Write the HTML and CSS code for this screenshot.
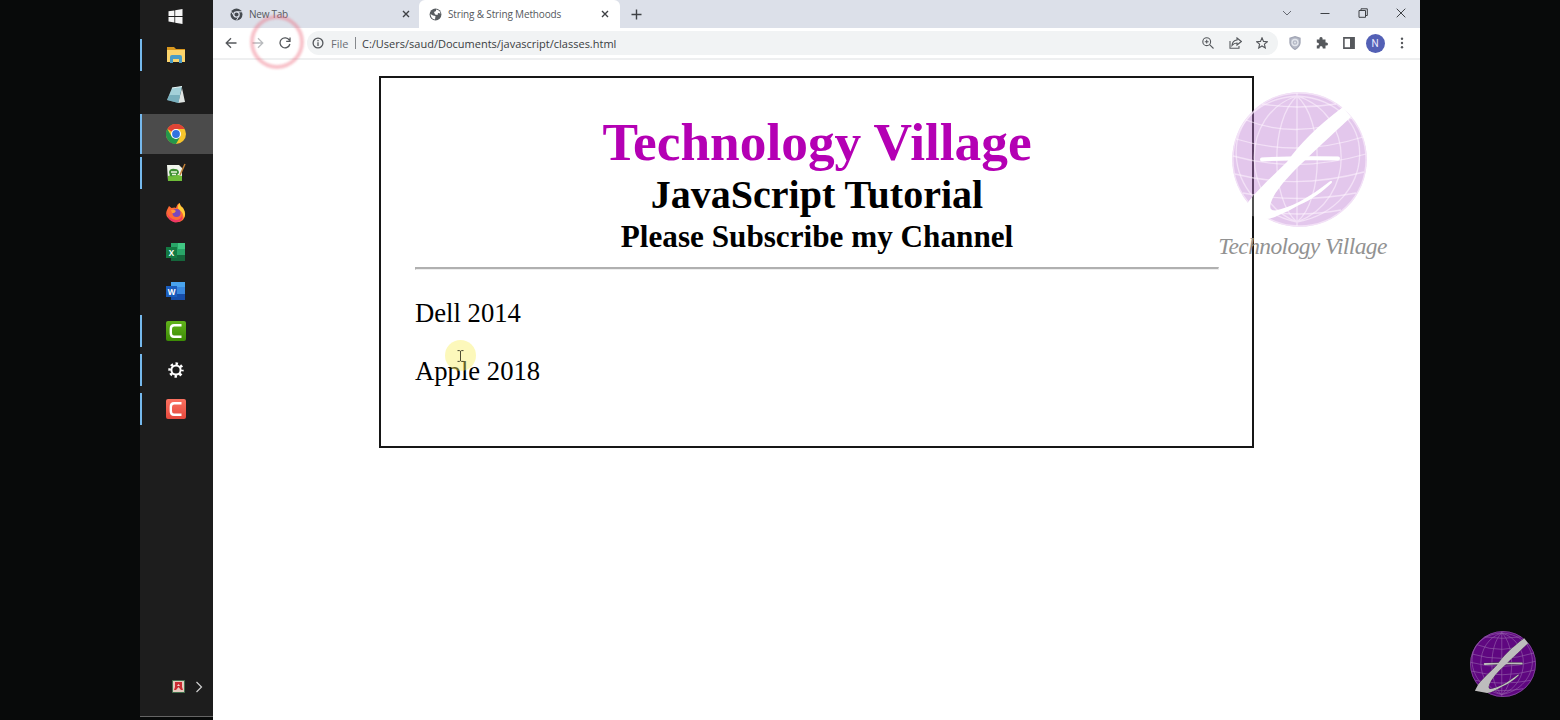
FILE: index.html
```
<!DOCTYPE html>
<html lang="en">
<head>
<meta charset="utf-8">
<title>String &amp; String Methoods</title>
<link rel="stylesheet" href="styles.css">
</head>
<body>
<svg class="defs" width="0" height="0" aria-hidden="true">
  <path id="mark" d="M111 15C84 35 67 53 55 70C42 83 29 94 17 109L10 122L35 127Q42 126 47 123Q57 119 67 113C81 107 91 99 99.500 91C101 89 99 88 97 90C88 97 78 104 67 110Q55 116 43.500 118.500C37 119 36 114 43.500 101Q51 90 60 81C81 60 105 38 119 25Z"/>
  <mask id="cut" maskUnits="userSpaceOnUse" x="-1" y="-1" width="137" height="137">
    <path fill="#fff" d="M-1-1H136V136H-1Z"/>
    <use href="#mark" fill="#000"/>
    <path d="M30 67.500Q67 65.500 106 66.500" fill="none" stroke="#000" stroke-width="4" stroke-linecap="round"/>
  </mask>
  <symbol id="globe" viewBox="0 0 135 135">
    <g mask="url(#cut)">
      <circle class="globe-ball" cx="67.5" cy="67.5" r="67.3"/>
      <g class="globe-grid">
        <circle cx="67.5" cy="67.5" r="66.5"/>
        <path d="M65 1V134M65 4C38 28 38 108 65 130M65 4C92 28 92 108 65 130M65 4C8 22 8 108 65 130M65 4C124 22 124 108 65 130M65 4C-22 10 -10 115 65 130M65 4C152 10 145 115 65 130"/>
        <path d="M30 12Q65 18 104 12M14 28Q65 48 120 26M4 47Q65 66 131 45M1 64Q65 82 134 62M3 82Q65 98 132 80M11 101Q65 112 124 101M26 118Q65 126 109 118"/>
      </g>
    </g>
    <use class="globe-mark" href="#mark"/>
    <path class="globe-bar" d="M30 67.500Q67 65.500 106 66.500"/>
  </symbol>
  <symbol id="camtasia" viewBox="0 0 20 20">
    <path d="M15.500 4.200H8Q4.800 4.200 4.800 8V12Q4.800 15.800 8 15.800H15.500" fill="none" stroke="#fff" stroke-width="2.400"/>
  </symbol>
</svg>

<div class="screen">
  <nav class="taskbar">
    <div class="task"><svg width="15" height="15" viewBox="0 0 15 15"><path fill="#f5f5f5" d="M.5 2.300L6.400 1.400V7H.5ZM7.200 1.200L14.500 0V7H7.200ZM.5 7.900H6.400V13.500L.5 12.600ZM7.200 7.900H14.500V15L7.200 13.700Z"/></svg></div>
    <div class="task open"><svg width="20" height="18" viewBox="0 0 20 18"><path fill="#d9981f" d="M1 1H8L10 3H19V8H1Z"/><path fill="#fbd46c" d="M1 4H19V16H1Z"/><path fill="#4a9cc6" d="M4 17V11Q4 9 6 9H14Q16 9 16 11V17H13V13H7V17Z"/></svg></div>
    <div class="task"><svg width="20" height="20" viewBox="0 0 20 20"><path fill="#dfe4e2" d="M16 3L19 17L12 18Z"/><path fill="#a3d0d9" d="M6 3L16 1.500L12.500 18L1 15Z"/><path fill="#5b9aaa" d="M3.500 10L14 10L12.500 18L1 15Z" opacity=".6"/><path stroke="#e9f7f8" stroke-width="1" d="M6 3L16 1.500"/></svg></div>
    <div class="task open active"><svg width="20" height="20" viewBox="0 0 20 20"><circle cx="10" cy="10" r="10" fill="#f7c52c"/><path fill="#df4436" d="M10 10L1.300 5A10 10 0 0 1 18.700 5H10Z"/><path fill="#24974b" d="M1.300 5A10 10 0 0 0 10 20L14.300 12.500L5.700 12.500Z"/><circle cx="10" cy="10" r="5" fill="#fff"/><circle cx="10" cy="10" r="3.900" fill="#3273df"/></svg></div>
    <div class="task open"><svg width="20" height="20" viewBox="0 0 20 20"><path fill="#f0f5ec" d="M1 2H13L16 5V18H2Z"/><path fill="#6ebc38" d="M2 13Q9 10 16 13V18H2Z"/><path fill="#3d8f32" d="M3 9Q4 5 9 6Q13 6 13 10Q10 14 4 13Z"/><path d="M5 9H11M6 11.500H10" stroke="#e9f5dc" stroke-width="1.300"/><path d="M19 1L14 12" stroke="#c48238" stroke-width="1.500"/></svg></div>
    <div class="task"><svg width="20" height="20" viewBox="0 0 20 20"><path fill="#ff6b35" d="M3 3L5.500 5Q9 4 10 5Q11 1 13.500 0Q14 3 17 5Q21 12 17 17Q12 21 6 18Q-2 14 1 7Q2 5 3 3Z"/><path fill="#ffcd38" d="M13.500 0Q14 3 17 5Q21 11 17.500 16Q18 10 13.500 7Q10 5 13.500 0Z"/><path fill="#ef3764" d="M1 8Q2 16 10 17Q15 17 16 12Q18 19 9 19.500Q1 18 1 8Z"/><circle cx="10.500" cy="10" r="4" fill="#7949bd"/><path fill="#ff9c32" d="M5 7Q8 6 10 8Q8 11 6 10Z"/></svg></div>
    <div class="task"><svg width="20" height="20" viewBox="0 0 20 20"><path fill="#29a568" d="M5 1H19V19H5Z"/><path fill="#40c783" d="M12 1H19V7H12Z"/><path fill="#15663b" d="M5 13H19V19H5Z"/><path fill="#147a43" d="M0 5H11V16H0Z"/><text x="5.500" y="13.500" class="app-letter">X</text></svg></div>
    <div class="task"><svg width="20" height="20" viewBox="0 0 20 20"><path fill="#3988df" d="M5 1H19V19H5Z"/><path fill="#49a3ed" d="M5 1H19V6H5Z"/><path fill="#174da9" d="M5 13H19V19H5Z"/><path fill="#1b5dbd" d="M0 5H11V16H0Z"/><text x="5.500" y="13.500" class="app-letter">W</text></svg></div>
    <div class="task open"><svg class="cam green" width="20" height="20"><use href="#camtasia"/></svg></div>
    <div class="task open"><svg width="16" height="16" viewBox="0 0 16 16" fill="none" stroke="#fff"><circle cx="8" cy="8" r="4.600" stroke-width="2"/><circle cx="8" cy="8" r="6.400" stroke-width="2.600" stroke-dasharray="2.500 2.527" stroke-dashoffset="1.250"/></svg></div>
    <div class="task open"><svg class="cam red" width="20" height="20"><use href="#camtasia"/></svg></div>
    <div class="tray">
      <svg width="13" height="13" viewBox="0 0 13 13"><path fill="#e5cbbf" stroke="#40714d" d="M.5.5H12.500V12.500H.5Z"/><path fill="#c82c31" d="M3 2H10V7L11 10H9L6.500 7L4 10H2L3 7Z"/><path fill="#f5d6d0" d="M6.500 4L8 6H5Z"/></svg>
      <svg width="8" height="12" viewBox="0 0 8 12"><path d="M1.500 1L6.500 6L1.500 11" fill="none" stroke="#d0d0d0" stroke-width="1.200"/></svg>
    </div>
  </nav>

  <main class="window">
    <header class="tabs">
      <div class="tab first">
        <svg width="13" height="13" viewBox="0 0 13 13"><circle cx="6.500" cy="6.500" r="6" fill="#454a50"/><circle cx="6.500" cy="6.500" r="2.700" fill="#454a50" stroke="#dde1ea" stroke-width="1.200"/><path d="M6.500 3.800H12M4 8L1.300 3.500M9 8L6.300 12.500" stroke="#dde1ea"/></svg>
        <span>New Tab</span>
        <svg class="close" width="8" height="8" viewBox="0 0 8 8"><path d="M1 1L7 7M7 1L1 7"/></svg>
      </div>
      <div class="tab current">
        <svg width="13" height="13" viewBox="0 0 13 13"><circle cx="6.500" cy="6.500" r="5.900" fill="#595d61"/><path fill="#fff" d="M7 1.500Q11 2 11.500 5.500L9 5L8.500 7L6 6.500L5 4L7 3ZM1.500 6L4 7.500L6.500 8L6 11.500Q2 11 1.500 6Z"/></svg>
        <span>String &amp; String Methoods</span>
        <svg class="close" width="8" height="8" viewBox="0 0 8 8"><path d="M1 1L7 7M7 1L1 7"/></svg>
      </div>
      <svg class="plus" width="11" height="11" viewBox="0 0 11 11"><path d="M5.500.5V10.500M.5 5.500H10.500"/></svg>
      <div class="controls">
        <svg width="10" height="10" viewBox="0 0 10 10"><path d="M1 3L5 7L9 3"/></svg>
        <svg width="10" height="10" viewBox="0 0 10 10"><path d="M.5 5.500H9.500"/></svg>
        <svg width="10" height="10" viewBox="0 0 10 10"><path d="M1 2.500H7.500V9.300H1ZM3 2.500V.8H9.300V7.500H7.500"/></svg>
        <svg width="10" height="10" viewBox="0 0 10 10"><path d="M.7.7L9.300 9.300M9.300.7L.7 9.300"/></svg>
      </div>
    </header>
    <div class="toolbar">
      <div class="nav">
        <svg width="12" height="12" viewBox="0 0 12 12"><path d="M11.500 6H1.500M6 1.200L1.200 6L6 10.800"/></svg>
        <svg class="muted" width="12" height="12" viewBox="0 0 12 12"><path d="M.5 6H10.500M6 1.200L10.800 6L6 10.800"/></svg>
        <svg width="12" height="12" viewBox="0 0 12 12"><path d="M10.300 3.200A5 5 0 1 0 10.900 7M11 .5V4.300H7.200"/></svg>
      </div>
      <div class="omnibox">
        <svg width="12" height="12" viewBox="0 0 12 12"><circle cx="6" cy="6" r="4.900"/><path d="M6 5.200V9M6 3V4.300"/></svg>
        <span class="scheme">File</span><i class="divider"></i>
        <span class="url">C:/Users/saud/Documents/javascript/classes.html</span>
        <div class="box-icons">
          <svg width="12" height="12" viewBox="0 0 12 12"><circle cx="4.700" cy="4.700" r="3.900"/><path d="M7.600 7.600L11.500 11.500M2.800 4.700H6.600M4.700 2.800V6.600"/></svg>
          <svg width="13" height="12" viewBox="0 0 13 12"><path d="M1 4V11.300H10V9M8 1L12.300 4.500L8 8V6Q5 6 3 8.500Q3.500 3.500 8 3Z"/></svg>
          <svg width="12" height="12" viewBox="0 0 12 12"><path d="M6 .8L7.500 4.400L11.400 4.700L8.400 7.200L9.300 11L6 9L2.700 11L3.600 7.200L.6 4.700L4.500 4.400Z"/></svg>
        </div>
      </div>
      <div class="extensions">
        <svg width="12" height="14" viewBox="0 0 12 14"><path fill="#b5b9c6" stroke="#a2a6b5" d="M6 .7L11 2.300V7Q10.500 11 6 13.300Q1.500 11 1 7V2.300Z"/><circle cx="6" cy="6.500" r="3" fill="none" stroke="#e3e6ed"/><circle cx="6" cy="6.500" r="1" fill="#e3e6ed" stroke="none"/></svg>
        <svg width="12" height="12" viewBox="0 0 12 12"><path fill="#55585c" stroke="none" d="M.8 2.500H3.500Q3 0 5 0Q7 0 6.500 2.500H9.500V5.500Q12 5 12 7Q12 9 9.500 8.500V11.500H6.800Q7 9 5 9Q3.300 9 3.500 11.500H.8V8.500Q3 8.500 3 7Q3 5.500.8 5.500Z"/></svg>
        <svg width="12" height="12" viewBox="0 0 12 12"><path d="M.9.900H11.100V11.100H.9Z" stroke-width="1.600"/><path fill="#55585c" stroke="none" d="M7 1H11V11H7Z"/></svg>
        <span class="avatar">N</span>
        <svg width="4" height="12" viewBox="0 0 4 12"><g fill="#55585c" stroke="none"><circle cx="2" cy="1.700" r="1.200"/><circle cx="2" cy="6" r="1.200"/><circle cx="2" cy="10.300" r="1.200"/></g></svg>
      </div>
    </div>
    <section class="page">
      <article class="card">
        <h1>Technology Village</h1>
        <h2>JavaScript Tutorial</h2>
        <h3>Please Subscribe my Channel</h3>
        <hr>
        <p>Dell 2014</p>
        <p>Apple 2018</p>
      </article>
    </section>
  </main>

  <div class="click-ring"></div>
  <div class="cursor"><svg width="7" height="12" viewBox="0 0 7 12"><path d="M.5.6H2.500L3.500 1.300L4.500.6H6.500M3.500 1V11M.5 11.400H2.500L3.500 10.700L4.500 11.400H6.500" fill="none" stroke="#4d4c32"/></svg></div>
  <div class="watermark">
    <svg class="globe light" width="135" height="135"><use href="#globe"/></svg>
    <span>Technology Village</span>
  </div>
  <svg class="globe badge" width="66" height="66"><use href="#globe"/></svg>
</div>
</body>
</html>
```

FILE: styles.css
```
* { box-sizing: border-box; }
body { margin: 0; background: #080a0a; }
svg { display: block; flex: none; }
.defs { position: absolute; }
.screen {
  position: relative;
  display: grid;
  grid-template-columns: 73px 1207px;
  justify-content: center;
  width: 1560px;
  height: 720px;
  overflow: hidden;
  background: #080a0a;
  font-family: "Open Sans", "Noto Sans", sans-serif;
}

.taskbar {
  display: flex;
  flex-direction: column;
  height: 717px;
  background: #1d1d1d;
  border-bottom: 1px solid #656565;
}
.task {
  display: flex;
  align-items: center;
  justify-content: center;
  flex: none;
  height: 39.3px;
  padding-right: 2px;
  border-block: 1px solid transparent;
}
.task:first-child { margin-top: -3.500px; }
.task.open {
  background: linear-gradient(#76b9ed, #76b9ed) left center / 2px 32px no-repeat;
}
.task.active {
  background: linear-gradient(90deg, #76b9ed 2px, #4b4b4b 2px);
}
.app-letter { font: bold 8px "Open Sans", sans-serif; fill: #fff; text-anchor: middle; }
.cam { border-radius: 2px; }
.cam.green { background: linear-gradient(#62b31c, #3c8b05); }
.cam.red { background: linear-gradient(#fa7160, #e5493d); }
.tray {
  display: flex;
  align-items: center;
  gap: 10px;
  margin-top: auto;
  padding: 0 0 23px 32px;
}

.window { background: #fff; height: 720px; }
.tabs {
  display: flex;
  align-items: center;
  height: 28px;
  background: #dce0e9;
  color: #55585d;
  font-size: 10px;
}
.tab { display: flex; align-items: center; height: 28px; gap: 6px; }
.tab.first { width: 206px; padding: 0 9px 0 17px; }
.tab.first span { letter-spacing: -.25px; }
.tab.current {
  width: 201px;
  gap: 6.500px;
  padding: 0 11px 0 9.500px;
  background: #fff;
  border-radius: 6px 6px 0 0;
}
.tab.current span { letter-spacing: -.15px; }
.tab span { flex: 1; white-space: nowrap; }
.close, .plus { fill: none; stroke: #3e4145; stroke-width: 1.4; }
.plus { margin-left: 11px; }
.controls {
  display: flex;
  gap: 28px;
  margin: -3px 14px 0 auto;
  fill: none;
  stroke: #3e4145;
}
.controls svg:first-child { stroke: #666a72; }

.toolbar {
  display: flex;
  align-items: center;
  height: 32px;
  border-bottom: 2px solid #eeeff0;
  fill: none;
  stroke: #55585c;
  stroke-width: 1.3;
}
.nav { display: flex; gap: 15px; padding: 0 16px 0 12px; }
.muted { stroke: #b9bbbe; }
.omnibox {
  display: flex;
  align-items: center;
  width: 971px;
  height: 24px;
  padding: 0 10px 0 5px;
  border-radius: 12px;
  background: #f1f3f4;
  color: #3a3d41;
  font-size: 11px;
}
.scheme { width: 19px; margin-left: 7px; color: #6b6f74; white-space: nowrap; }
.divider { width: 1px; height: 12px; margin: 0 6.500px 0 4.500px; background: #85888c; }
.url { white-space: nowrap; }
.box-icons { display: flex; align-items: center; gap: 14.500px; margin-left: auto; stroke-width: 1.1; }
.extensions { display: flex; align-items: center; gap: 15px; margin-left: 10.500px; }
.avatar {
  width: 19px;
  height: 19px;
  margin: 0 -4px;
  border-radius: 50%;
  background: #5360b5;
  color: #e9ebff;
  font: 10px/19px Roboto, sans-serif;
  text-align: center;
}
.extensions > :last-child { margin-left: 4px; }

.page { padding: 16px 166px; }
.card {
  height: 372px;
  padding: 34px 33px 0 34px;
  border: 2px solid #161616;
  color: #000;
  font: 26.670px/30px "Liberation Serif", serif;
}
.card h1, .card h2, .card h3 { margin: 0; text-align: center; white-space: nowrap; }
.card h1 { color: #b400b4; font-size: 53.330px; line-height: 61px; }
.card h2 { font-size: 40px; line-height: 44px; }
.card h3 { font-size: 31.200px; line-height: 39px; }
.card hr { height: 3px; margin: 11px 0 28px; border: 1px solid #b0b0b0; border-top-width: 2px; border-right-color: #eee; border-bottom-color: #eee; }
.card p { margin: 0 0 28px; }

/* Overlays drawn above the desktop */
.click-ring {
  position: absolute;
  left: 250px;
  top: 15px;
  width: 54px;
  height: 54px;
  border: 4px solid rgba(238, 110, 128, .42);
  border-radius: 50%;
  filter: blur(.8px);
}
.cursor {
  position: absolute;
  left: 444.500px;
  top: 340px;
  display: grid;
  place-items: center;
  width: 31px;
  height: 31px;
  border-radius: 50%;
  background: rgba(247, 239, 92, .42);
}
.watermark {
  position: absolute;
  left: 1217px;
  top: 92px;
  width: 171px;
  display: flex;
  flex-direction: column;
  align-items: center;
  color: #929292;
  font: italic 23.500px/30px "Liberation Serif", serif;
  white-space: nowrap;
}
.watermark .globe { margin-left: -6px; }
.watermark span { margin-top: 4px; letter-spacing: -.600px; }
.globe { overflow: visible; }
.globe-ball { fill: var(--ball); }
.globe-grid { fill: none; stroke: var(--line); stroke-width: 1.3; }
.globe-mark { fill: var(--mark); }
.globe-bar { fill: none; stroke: var(--mark); stroke-width: 3.8; stroke-linecap: round; }
.light { --ball: rgba(190, 125, 210, .43); --line: rgba(255, 245, 255, .55); --mark: rgba(255, 255, 255, .25); }
.badge {
  --ball: #5f0780;
  --line: #9460aa;
  --mark: #bdbdbd;
  position: absolute;
  left: 1470px;
  top: 631px;
}
```
